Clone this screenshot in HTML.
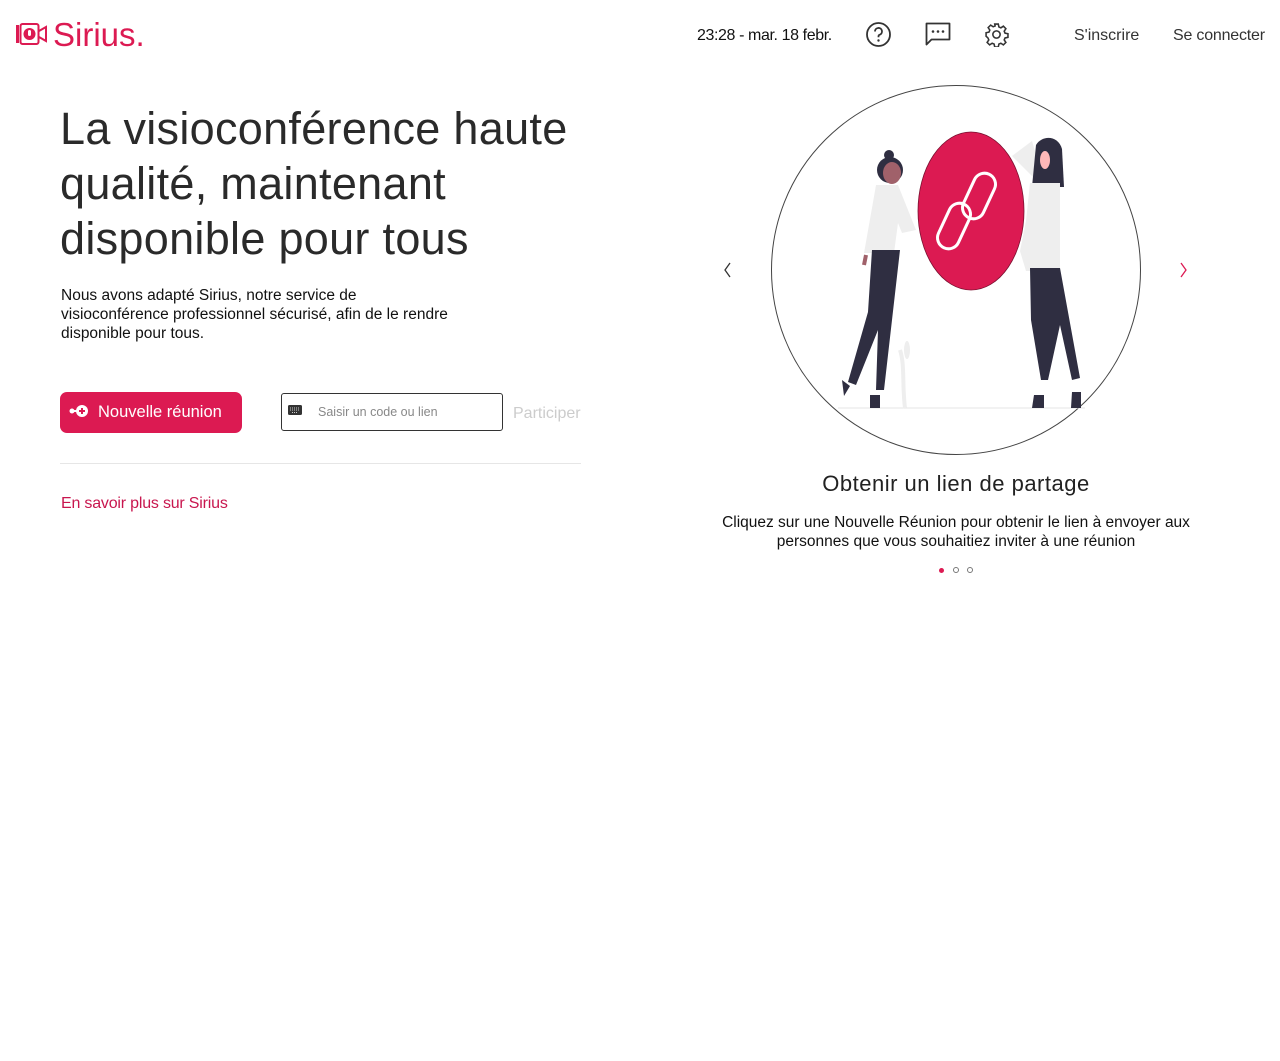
<!DOCTYPE html>
<html><head><meta charset="utf-8"><style>
*{margin:0;padding:0;box-sizing:border-box}
body{width:1280px;height:1061px;background:#fff;font-family:"Liberation Sans",sans-serif;color:#111;position:relative;overflow:hidden}
.abs{position:absolute;white-space:nowrap}
</style></head><body>
<svg class="abs" style="left:15px;top:22px" width="33" height="24" viewBox="0 0 33 24"><rect x="1" y="3" width="3" height="18" fill="#dc1a52"/><rect x="5.5" y="2" width="18" height="20" rx="2" fill="none" stroke="#dc1a52" stroke-width="2"/><circle cx="14.5" cy="12" r="6" fill="#dc1a52"/><rect x="13" y="8" width="3" height="6" rx="1.5" fill="#fff"/><path d="M24 9 L31 5 V19 L24 15" fill="none" stroke="#dc1a52" stroke-width="2"/></svg>
<div class="abs" style="left:53px;top:16px;font-size:33px;color:#dc1a52">Sirius.</div>
<div class="abs" style="left:697px;top:27px;font-size:16px;letter-spacing:-0.4px">23:28 - mar. 18 febr.</div>
<svg class="abs" style="left:865px;top:21px" width="27" height="27" viewBox="0 0 27 27"><circle cx="13.5" cy="13.5" r="11.5" fill="none" stroke="#333" stroke-width="1.8"/><path d="M10 10.5a3.5 3.5 0 1 1 4.5 3.3c-.8.3-1 .9-1 1.7v.8" fill="none" stroke="#333" stroke-width="1.8"/><circle cx="13.5" cy="19.5" r="1.2" fill="#333"/></svg>
<svg class="abs" style="left:925px;top:22px" width="26" height="26" viewBox="0 0 26 26"><path d="M1.5 1.5h23v16h-18l-5 5z" fill="none" stroke="#333" stroke-width="1.8" stroke-linejoin="round"/><circle cx="8" cy="9.5" r="1.3" fill="#333"/><circle cx="13" cy="9.5" r="1.3" fill="#333"/><circle cx="18" cy="9.5" r="1.3" fill="#333"/></svg>
<svg class="abs" style="left:984px;top:22px" width="25" height="25" viewBox="0 0 24 24"><path fill="none" stroke="#333" stroke-width="1.5" d="M10.3 2h3.4l.6 2.8 1.9.8 2.4-1.6 2.4 2.4-1.6 2.4.8 1.9 2.8.6v3.4l-2.8.6-.8 1.9 1.6 2.4-2.4 2.4-2.4-1.6-1.9.8-.6 2.8h-3.4l-.6-2.8-1.9-.8-2.4 1.6-2.4-2.4 1.6-2.4-.8-1.9L2 13.7v-3.4l2.8-.6.8-1.9L4 5.4 6.4 3l2.4 1.6 1.9-.8z"/><circle cx="12" cy="12" r="3.5" fill="none" stroke="#333" stroke-width="1.5"/></svg>
<div class="abs" style="left:1074px;top:27px;font-size:16px;color:#333">S'inscrire</div>
<div class="abs" style="left:1173px;top:27px;font-size:16px;color:#333;letter-spacing:-0.2px">Se connecter</div>

<div class="abs" style="left:60px;top:101px;font-size:45px;font-weight:300;line-height:55px;color:#2a2a2a;letter-spacing:0.3px">La visioconférence haute<br>qualité, maintenant<br>disponible pour tous</div>
<div class="abs" style="left:61px;top:286px;font-size:15.5px;line-height:19px">Nous avons adapté Sirius, notre service de<br>visioconférence professionnel sécurisé, afin de le rendre<br>disponible pour tous.</div>
<div class="abs" style="left:60px;top:392px;width:182px;height:41px;background:#dc1a52;border-radius:7px;color:#fff;font-size:16.5px;padding:11px 0 0 38px">Nouvelle réunion</div>
<svg class="abs" style="left:69px;top:404px" width="20" height="14" viewBox="0 0 20 14"><circle cx="3" cy="7" r="2.5" fill="#fff"/><rect x="3" y="6" width="6" height="2" fill="#fff"/><circle cx="13" cy="7" r="6" fill="#fff"/><path d="M13 4v6M10 7h6" stroke="#dc1a52" stroke-width="2"/></svg>
<div class="abs" style="left:281px;top:393px;width:222px;height:38px;border:1px solid #333;border-radius:3px"></div>
<svg class="abs" style="left:288px;top:405px" width="14" height="10"><rect width="14" height="10" rx="1.5" fill="#333"/><path d="M2 3h10M2 5h10M4 7.5h6" stroke="#fff" stroke-width="0.8" stroke-dasharray="1 1"/></svg>
<div class="abs" style="left:318px;top:405px;font-size:12.5px;color:#888">Saisir un code ou lien</div>
<div class="abs" style="left:513px;top:405px;font-size:16px;color:#ccc">Participer</div>
<div class="abs" style="left:60px;top:463px;width:521px;height:1px;background:#e6e6e6"></div>
<div class="abs" style="left:61px;top:495px;font-size:16px;color:#c8164e;letter-spacing:-0.2px">En savoir plus sur Sirius</div>

<svg class="abs" style="left:720px;top:80px" width="480" height="380" viewBox="720 80 480 380">
<path d="M730 263l-5 7 5 7" fill="none" stroke="#333" stroke-width="1.3"/>
<path d="M1181 263l5 7-5 7" fill="none" stroke="#dc1a52" stroke-width="1.3"/>
<circle cx="956" cy="270" r="184.5" fill="none" stroke="#444" stroke-width="1"/>
<line x1="838" y1="408" x2="1085" y2="408" stroke="#e5e5e5"/>
<path d="M1012 156l20 -15 15 50z" fill="#eee"/>
<ellipse cx="971" cy="211" rx="53" ry="79" fill="#dc1a52" stroke="#7a1030" stroke-width="0.8"/>
<rect x="943" y="202" width="22" height="48" rx="11" transform="rotate(25 954 226)" fill="none" stroke="#fff" stroke-width="3"/>
<rect x="968" y="172" width="22" height="48" rx="11" transform="rotate(25 979 196)" fill="none" stroke="#fff" stroke-width="3"/>
<!-- left woman -->
<circle cx="890" cy="170" r="13" fill="#2f2e41"/><circle cx="889" cy="155" r="5" fill="#2f2e41"/>
<ellipse cx="892" cy="173" rx="9" ry="11" fill="#a0616a"/>
<path d="M876 185h22l18 45-14 3-4 -10-4 30h-30l8-45z" fill="#eee"/>
<path d="M872 250h28l-8 70-8 70h-8l2-60-12 30-10 25-8-3 20-70z" fill="#2f2e41"/>
<path d="M866 255l-2 10" stroke="#a0616a" stroke-width="4"/>
<!-- right woman -->
<path d="M1036 145c6-10 22-10 26 4l2 38h-32z" fill="#2f2e41"/>
<ellipse cx="1045" cy="160" rx="5" ry="9" fill="#ffb8b8"/>
<path d="M1030 183h30v88h-34l-6-20 6-30z" fill="#eee"/>
<path d="M1030 268h30l20 110-8 2-12-55-12 55h-7l-10-60z" fill="#2f2e41"/>
<path d="M1034 395h10v13h-12zM1072 392h9v16h-10z" fill="#2f2e41"/><path d="M842 380l8 6-6 10z M870 395h10v13h-10z" fill="#2f2e41"/>
<path d="M900 350c5 15 2 35 5 58" stroke="#eee" stroke-width="4" fill="none"/><ellipse cx="907" cy="350" rx="3" ry="9" fill="#eee"/>
</svg>
<div class="abs" style="left:0;width:1912px;top:471px;text-align:center;font-size:22px;font-weight:300;color:#222;letter-spacing:0.5px">Obtenir un lien de partage</div>
<div class="abs" style="left:0;width:1912px;top:513px;text-align:center;font-size:15.5px;line-height:19px">Cliquez sur une Nouvelle Réunion pour obtenir le lien à envoyer aux<br>personnes que vous souhaitiez inviter à une réunion</div>
<div class="abs" style="left:939px;top:568px;width:5px;height:5px;border-radius:50%;background:#dc1a52"></div>
<div class="abs" style="left:953px;top:567px;width:6px;height:6px;border-radius:50%;border:1px solid #777"></div>
<div class="abs" style="left:967px;top:567px;width:6px;height:6px;border-radius:50%;border:1px solid #777"></div>
</body></html>
